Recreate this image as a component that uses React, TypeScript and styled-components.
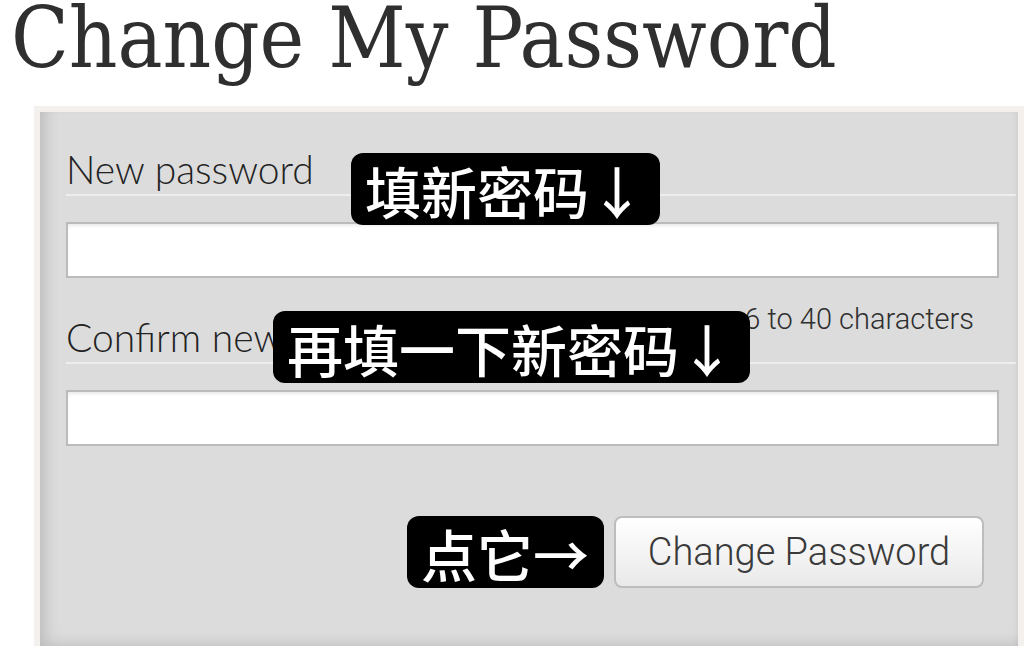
import React from 'react';
import styled, { createGlobalStyle } from 'styled-components';

/**
 * Styles
 */

const GlobalStyle = createGlobalStyle`
  html, body {
    margin: 0;
    padding: 0;
    background: #ffffff;
  }
  body {
    width: 1024px;
    height: 646px;
    overflow: hidden;
  }
`;

const Page = styled.div`
  position: relative;
  width: 1024px;
  height: 646px;
  overflow: hidden;
`;

const Title = styled.h1`
  margin: 0;
  padding: 0 0 0 11px;
  height: 106px;
  font-family: 'DejaVu Serif', 'Liberation Serif', serif;
  font-stretch: condensed;
  font-weight: 400;
  font-size: 84px;
  line-height: 76px;
  color: #2f2f2f;
  white-space: nowrap;
`;

const Panel = styled.div`
  margin-left: 34px;
  border: 6px solid #f3f0ed;
  border-bottom: none;
  background: #dcdcdc;
  box-shadow: inset 12px -10px 16px -8px rgba(0, 0, 0, 0.16),
    inset -4px 0 6px -4px rgba(0, 0, 0, 0.1);
  padding: 0 2px 60px 26px;
`;

const Field = styled.div`
  display: flex;
  flex-direction: column;
`;

const LabelRow = styled.div<{ $top: number }>`
  display: flex;
  justify-content: space-between;
  align-items: flex-end;
  padding-top: ${({ $top }) => $top}px;
  height: 50px;
  border-bottom: 2px solid #efedeb;
`;

const Label = styled.label`
  font-family: Lato, 'Open Sans', sans-serif;
  font-weight: 300;
  font-size: 39px;
  line-height: 50px;
  color: #222222;
`;

const Hint = styled.span`
  font-family: Roboto, 'Noto Sans', sans-serif;
  font-weight: 300;
  font-size: 29px;
  line-height: 30px;
  color: #2f2f2f;
  margin: 0 42px 28px 0;
`;

const Input = styled.input`
  box-sizing: border-box;
  margin-top: 26px;
  width: calc(100% - 17px);
  height: 56px;
  border: 2px solid #bbbbbb;
  background: #ffffff;
  box-shadow: inset 0 3px 4px -2px rgba(0, 0, 0, 0.12);
  outline: none;
`;

const Actions = styled.div`
  display: flex;
  justify-content: flex-end;
  padding: 70px 32px 0 0;
`;

const SubmitButton = styled.button`
  width: 370px;
  height: 72px;
  border: 2px solid #bdbdbd;
  border-radius: 8px;
  background: linear-gradient(#ffffff, #e9e9e9);
  font-family: Roboto, 'Noto Sans', sans-serif;
  font-weight: 300;
  font-size: 38px;
  color: #3a3a3a;
  cursor: pointer;
`;

const Note = styled.div<{ $x: number; $y: number }>`
  position: absolute;
  left: ${({ $x }) => $x}px;
  top: ${({ $y }) => $y}px;
  height: 72px;
  padding: 0 15px 0 14px;
  display: flex;
  align-items: center;
  background: #000000;
  border-radius: 12px;
  font-family: 'Noto Sans CJK SC', 'Noto Sans', sans-serif;
  font-weight: 500;
  font-size: 56px;
  color: #ffffff;
  white-space: nowrap;
`;

/**
 * Component
 */

export default function App(): JSX.Element {
  return (
    <Page>
      <GlobalStyle />
      <Title>Change My Password</Title>
      <Panel>
        <Field>
          <LabelRow $top={32}>
            <Label>New password</Label>
          </LabelRow>
          <Input type="password" />
        </Field>
        <Field>
          <LabelRow $top={34}>
            <Label>Confirm new password</Label>
            <Hint>6 to 40 characters</Hint>
          </LabelRow>
          <Input type="password" />
        </Field>
        <Actions>
          <SubmitButton>Change Password</SubmitButton>
        </Actions>
      </Panel>

      <Note $x={351} $y={153}>填新密码↓</Note>
      <Note $x={273} $y={311}>再填一下新密码↓</Note>
      <Note $x={407} $y={516}>点它→</Note>
    </Page>
  );
}
